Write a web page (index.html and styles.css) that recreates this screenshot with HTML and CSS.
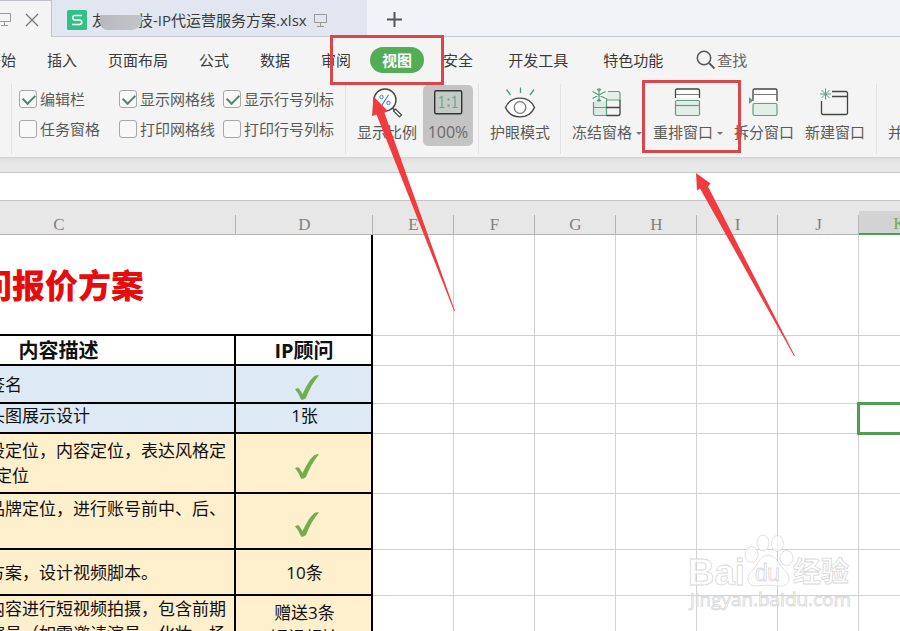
FILE: index.html
```html
<!DOCTYPE html>
<html lang="zh-CN">
<head>
  <meta charset="UTF-8">
  <title>IP代运营服务方案.xlsx</title>
  <link rel="stylesheet" href="styles.css">
</head>
<body>

  <div class="tabs">
    <div class="tab active">
      <svg width="14" height="16" viewBox="0 0 14 16"><path d="M.5 1.500h12v8H.5zM6.500 9.500v4M3 13.500h7" fill="none" stroke="#999"/></svg>
      <svg width="14" height="14" viewBox="0 0 14 14"><path d="M1 1l12 12M13 1L1 13" stroke="#777" stroke-width="1.300"/></svg>
    </div>
    <div class="tab file">
      <svg class="logo" width="20" height="20" viewBox="0 0 20 20"><rect width="20" height="20" rx="1.500" fill="#32c087"/><path d="M15 5.500H8a2.200 2.200 0 0 0 0 4.500h4.500a2.200 2.200 0 0 1 0 4.500H5" fill="none" stroke="#fff" stroke-width="1.600"/></svg>
      <span class="name">友<span class="smudge"></span>技-IP代运营服务方案.xlsx</span>
      <svg width="14" height="16" viewBox="0 0 14 16"><path d="M.5 1.500h12v8H.5zM6.500 9.500v4M3 13.500h7" fill="none" stroke="#999"/></svg>
    </div>
    <svg class="plus" width="15" height="15" viewBox="0 0 15 15"><path d="M7.500 0v15M0 7.500h15" stroke="#555" stroke-width="2"/></svg>
  </div>

  <div class="menu">
    <span>开始</span>
    <span>插入</span>
    <span>页面布局</span>
    <span>公式</span>
    <span>数据</span>
    <span>审阅</span>
    <span class="current">视图</span>
    <span>安全</span>
    <span class="wide">开发工具</span>
    <span class="wide">特色功能</span>
    <span class="search">
      <svg width="20" height="20" viewBox="0 0 20 20"><circle cx="8" cy="8" r="6.700" fill="none" stroke="#555" stroke-width="1.500"/><path d="M13 13l5.500 5.500" stroke="#555" stroke-width="1.800"/></svg>查找
    </span>
  </div>

  <div class="ribbon">
    <div class="group edge"></div>
    <div class="group checks">
      <label><i class="box on"></i>编辑栏</label>
      <label><i class="box on"></i>显示网格线</label>
      <label><i class="box on"></i>显示行号列标</label>
      <label><i class="box"></i>任务窗格</label>
      <label><i class="box"></i>打印网格线</label>
      <label><i class="box"></i>打印行号列标</label>
    </div>
    <div class="group zoom">
      <div class="btn">
        <svg width="34" height="34" viewBox="0 0 34 34"><circle cx="15" cy="15" r="11" fill="#fff" stroke="#444" stroke-width="1.400"/><path d="M22.500 23l2.500 2.500" stroke="#444" stroke-width="1.500"/><path d="M25.500 24l6 6-2 2-6-6z" fill="#fff" stroke="#444" stroke-width="1.200"/><path d="M18.500 10l-6.500 10" stroke="#3f7cc8" stroke-width="1.200"/><circle cx="11.500" cy="12" r="1.700" fill="none" stroke="#3f7cc8"/><circle cx="18.500" cy="18" r="1.700" fill="none" stroke="#3f7cc8"/></svg>
        <span>显示比例</span>
      </div>
      <div class="btn pressed">
        <svg width="34" height="34" viewBox="0 0 34 34"><rect x="3.700" y="5.700" width="27" height="23" rx="1.500" fill="#c4cac6" stroke="#333" stroke-width="1.400"/><path d="M8.500 13l2.500-1.500v11M8.500 22.500h5M21.500 13l2.500-1.500v11M21.500 22.500h5" fill="none" stroke="#6fa188" stroke-width="1.200"/><path d="M16.500 13.500h2v2h-2zM16.500 19.500h2v2h-2z" fill="#6fa188"/></svg>
        <span>100%</span>
      </div>
    </div>
    <div class="group eye">
      <div class="btn">
        <svg width="34" height="34" viewBox="0 0 34 34"><path d="M2.500 22.500C8 10 26 10 31.500 22.500 26 35 8 35 2.500 22.500z" fill="#fff" stroke="#444" stroke-width="1.400"/><circle cx="17" cy="22.500" r="5.800" fill="none" stroke="#777" stroke-width="1.300"/><path d="M3.500 4.500L7.500 10M17.500 2.500V8M31 4.500L27 10" stroke="#4e9a7c" stroke-width="1.300"/></svg>
        <span>护眼模式</span>
      </div>
    </div>
    <div class="group windows">
      <div class="btn drop">
        <svg width="34" height="34" viewBox="0 0 34 34"><path d="M3.500 16.500h13v14h-11a2 2 0 0 1-2-2z" fill="#dcebe3"/><path d="M16.500 6.500h11a2 2 0 0 1 2 2v6h-13z" fill="#e3efe8"/><path d="M18 6.500h10a2 2 0 0 1 2 2v6.500H17M16.500 13v17.500H5.500a2 2 0 0 1-2-2V17M3.500 22.500h13" fill="none" stroke="#5f9d80" stroke-width="1.200"/><path d="M30 15v13.500a2 2 0 0 1-2 2H16.500M16.500 22.500H30" fill="none" stroke="#444" stroke-width="1.300"/><path d="M9 3v14M2.500 6.500l13 7M15.500 6.500l-13 7M7 4l2 2 2-2M7 16l2-2 2 2" fill="none" stroke="#5f9d80" stroke-width="1.200"/></svg>
        <span>冻结窗格<b class="caret"></b></span>
      </div>
      <div class="btn drop">
        <svg width="34" height="34" viewBox="0 0 34 34"><path d="M4.500 13V5.500a1.500 1.500 0 0 1 1.500-1.500h21a1.500 1.500 0 0 1 1.500 1.500V13" fill="#fff" stroke="#444" stroke-width="1.300"/><path d="M5 9.500h23" stroke="#777"/><rect x="4.500" y="15.500" width="24" height="15" rx="1.500" fill="#e2efe8" stroke="#5f9d80" stroke-width="1.200"/><path d="M5 20.500h23" stroke="#5f9d80" stroke-width="1.200"/></svg>
        <span>重排窗口<b class="caret"></b></span>
      </div>
      <div class="btn">
        <svg width="34" height="34" viewBox="0 0 34 34"><path d="M6 16V5.500A1.500 1.500 0 0 1 7.500 4h21A1.500 1.500 0 0 1 30 5.500V16" fill="#fff" stroke="#444" stroke-width="1.300"/><path d="M6.500 9.500h23" stroke="#777"/><rect x="6" y="18.500" width="24" height="12" rx="1.500" fill="#e2efe8" stroke="#5f9d80" stroke-width="1.200"/><path d="M2 12l4 3.500-4 3.500z" fill="#5f9d80"/></svg>
        <span>拆分窗口</span>
      </div>
      <div class="btn">
        <svg width="34" height="34" viewBox="0 0 34 34"><path d="M14 6.500h14A1.500 1.500 0 0 1 29.500 8v20a1.500 1.500 0 0 1-1.500 1.500H5A1.500 1.500 0 0 1 3.500 28V16M14 11.500h15" fill="none" stroke="#444" stroke-width="1.300"/><path d="M7.500 3.500v11M2 9h11M3.500 5l8 8M11.500 5l-8 8" stroke="#5f9d80" stroke-width="1"/></svg>
        <span>新建窗口</span>
      </div>
    </div>
    <div class="group">
      <div class="btn last"><span>并排</span></div>
    </div>
  </div>

  <div class="strip"></div>
  <div class="formula-bar"></div>

  <div class="sheet">
    <table>
      <colgroup>
        <col class="c-desc"><col class="c-ip"><col><col><col><col><col><col><col>
      </colgroup>
      <thead>
        <tr><th>C</th><th>D</th><th>E</th><th>F</th><th>G</th><th>H</th><th>I</th><th>J</th><th class="sel">K</th></tr>
      </thead>
      <tbody>
        <tr class="r-title">
          <td class="title" colspan="2">问报价方案</td>
          <td></td><td></td><td></td><td></td><td></td><td></td><td></td>
        </tr>
        <tr class="r-head">
          <td class="head">内容描述</td><td class="head">IP顾问</td>
          <td></td><td></td><td></td><td></td><td></td><td></td><td></td>
        </tr>
        <tr class="r-sign">
          <td class="desc blue">签名</td>
          <td class="val blue tick"><svg width="24" height="25" viewBox="0 0 24 25"><path d="M0 14.500q2-2 4-1l3.500 5.500C11 12 14.500 5 19.500 1 21 0 22.500 0 24 .3 18.500 7 14 15 11 23q-2.500 2.500-5 1.500C4.500 21 3 17.500 0 14.500z" fill="#74ad50"/></svg></td>
          <td></td><td></td><td></td><td></td><td></td><td></td><td></td>
        </tr>
        <tr class="r-banner">
          <td class="desc blue">头图展示设计</td><td class="val blue">1张</td>
          <td></td><td></td><td></td><td></td><td></td><td></td><td class="cursor"></td>
        </tr>
        <tr class="r-position">
          <td class="desc sand">设定位，内容定位，表达风格定<br><span class="indent">定位</span></td>
          <td class="val sand tick"><svg width="24" height="25" viewBox="0 0 24 25"><path d="M0 14.500q2-2 4-1l3.500 5.500C11 12 14.500 5 19.500 1 21 0 22.500 0 24 .3 18.500 7 14 15 11 23q-2.500 2.500-5 1.500C4.500 21 3 17.500 0 14.500z" fill="#74ad50"/></svg></td>
          <td></td><td></td><td></td><td></td><td></td><td></td><td></td>
        </tr>
        <tr class="r-brand">
          <td class="desc sand">品牌定位，进行账号前中、后、<br>&nbsp;</td>
          <td class="val sand tick"><svg width="24" height="25" viewBox="0 0 24 25"><path d="M0 14.500q2-2 4-1l3.500 5.500C11 12 14.500 5 19.500 1 21 0 22.500 0 24 .3 18.500 7 14 15 11 23q-2.500 2.500-5 1.500C4.500 21 3 17.500 0 14.500z" fill="#74ad50"/></svg></td>
          <td></td><td></td><td></td><td></td><td></td><td></td><td></td>
        </tr>
        <tr class="r-script">
          <td class="desc sand">方案，设计视频脚本。</td><td class="val sand">10条</td>
          <td></td><td></td><td></td><td></td><td></td><td></td><td></td>
        </tr>
        <tr class="r-shoot">
          <td class="desc sand">内容进行短视频拍摄，包含前期<br>演员（如需邀请演员、化妆、场</td>
          <td class="val sand">赠送3条<br>短视频拍</td>
          <td></td><td></td><td></td><td></td><td></td><td></td><td></td>
        </tr>
      </tbody>
    </table>
  </div>

  <svg class="overlay" width="900" height="631" viewBox="0 0 900 631">
    <!-- watermark -->
    <g class="mark">
      <text x="688" y="585" font-size="36" font-weight="bold" font-family="Liberation Sans" textLength="57" lengthAdjust="spacingAndGlyphs">Bai</text>
      <ellipse cx="751.500" cy="554.500" rx="6.500" ry="8"/>
      <ellipse cx="763" cy="543" rx="6" ry="8"/>
      <ellipse cx="777.500" cy="543.500" rx="6" ry="8"/>
      <ellipse cx="786.500" cy="558" rx="6.500" ry="7.500"/>
      <path d="M768 555.500c7 0 9.500 5 13 10.500 3.500 5 8 7 8 12.500 0 6-5 8-10 7.500-4-1-18-1-22 0-5 .5-9-2-9-7.500s4.500-8 8-12.500c3.500-5.500 5-10.500 12-10.500z"/>
      <text x="755" y="581" font-size="23" font-family="Liberation Sans" textLength="25">du</text>
      <text x="793" y="582" font-size="28" font-weight="bold" textLength="56">经验</text>
      <text x="690" y="606" font-size="18" textLength="161" lengthAdjust="spacingAndGlyphs">jingyan.baidu.com</text>
    </g>
    <!-- callouts -->
    <g fill="none" stroke="#d9474a" stroke-width="3">
      <rect x="331.500" y="36.500" width="111" height="47"/>
      <rect x="643.500" y="81.500" width="96" height="70"/>
    </g>
    <path class="arrow" d="M373.500 96.500L387.500 110.500 384.500 113 455 311 454 311 376.500 114.500 372 116z"/>
    <path class="arrow" d="M696 173L710.500 183.500 708 186.500 795 356 794 356 700 188.500 697 190.500z"/>
  </svg>

</body>
</html>
```
FILE: styles.css
```css
* {
  box-sizing: border-box;
}

body {
  margin: 0;
  width: 900px;
  height: 631px;
  overflow: hidden;
  position: relative;
  background: #fff;
  color: #3a3a3a;
  font-family: "Open Sans", "Noto Sans CJK SC", sans-serif;
  font-size: 15px;
}

svg {
  display: block;
  flex: none;
}

/* document tabs */
.tabs {
  display: flex;
  height: 37px;
  background: #f2f3f8;
  border-bottom: 1px solid #c6c9d2;
}

.tab {
  display: flex;
  align-items: center;
  height: 36px;
}

.tab.active {
  width: 52px;
  height: 37px;
  gap: 13px;
  padding-top: 2px;
  background: #f4f4f4;
  border-top: 1px solid #bfc2ca;
  border-right: 1px solid #bfc2ca;
}

.tab.active svg:first-child {
  margin-left: -2px;
}

.tab.file {
  width: 315px;
  padding: 4px 0 0 15px;
  background: #e1e6f0;
}

.name {
  width: 215px;
  margin-left: 5px;
  line-height: 22px;
  white-space: nowrap;
}

.tab.file svg:last-child {
  margin: 2px 0 0 7px;
}

.smudge {
  display: inline-block;
  width: 42px;
  height: 15px;
  margin: 0 -4px 0 -7px;
  vertical-align: -4px;
  background: linear-gradient(100deg, #b6b8bc, #c3c6cb);
  border-radius: 0 4px 12px 8px;
  position: relative;
}

.plus {
  margin: 12px 0 0 20px;
}

/* menu */
.menu {
  display: flex;
  align-items: center;
  gap: 31px;
  height: 45px;
  background: #f4f4f4;
  white-space: nowrap;
}

.menu span {
  margin-top: 1px;
  line-height: 22px;
}

.menu span:first-child {
  margin-left: -14px;
}

.menu .current {
  height: 26px;
  margin: 1px -12px 0 -12px;
  padding: 0 12px;
  border-radius: 13px;
  background: #53ad55;
  color: #fff;
  font-weight: bold;
  line-height: 26px;
}

.menu .wide {
  margin-left: 4px;
}

.menu .search {
  display: flex;
  align-items: center;
  margin-left: 2px;
  gap: 1px;
  color: #666;
}

/* ribbon */
.ribbon {
  display: flex;
  height: 76px;
  padding: 2px 0 3px;
  background: #f4f4f4;
  border-bottom: 1px solid #d2d2d2;
  color: #5a5a5a;
  white-space: nowrap;
  overflow: hidden;
}

.group {
  display: flex;
  flex: none;
  border-right: 1px solid #e2e2e2;
}

.edge {
  width: 12px;
}

.checks {
  display: grid;
  grid-template-columns: 100px 104px 123px;
  grid-template-rows: 30px 30px;
  width: 334px;
  padding-left: 7px;
}

.checks label {
  display: flex;
  align-items: center;
  gap: 3px;
  line-height: 22px;
  padding-bottom: 1px;
}

.box {
  width: 18px;
  height: 18px;
  border: 1px solid #a8a8a8;
  border-radius: 3px;
  background: #f8f8f8;
}

.box.on::after {
  content: "";
  display: block;
  width: 10px;
  height: 6px;
  margin: 3px 0 0 3px;
  border: solid #4c8267;
  border-width: 0 0 2px 2px;
  transform: rotate(-45deg);
}

.zoom {
  width: 133px;
  gap: 6px;
  padding-left: 11px;
}

.eye {
  width: 82px;
  padding-left: 11px;
}

.windows {
  width: 316px;
  gap: 11px;
  padding-left: 11px;
}

.btn {
  display: flex;
  flex-direction: column;
  align-items: center;
  width: 60px;
  height: 61px;
  margin-top: 1px;
}

.btn span {
  line-height: 24px;
  margin-top: 1px;
}

.btn.pressed {
  width: 50px;
  border-radius: 5px;
  background: #c4c4c4;
  color: #6a6a6a;
  font-size: 16px;
}

.btn.drop {
  width: 70px;
}

.btn.last {
  width: 40px;
  margin-left: 6px;
  padding-top: 34px;
}

.caret {
  display: inline-block;
  margin: 0 0 3px 4px;
  border: solid transparent;
  border-width: 3px 3px 0;
  border-top-color: #777;
}

/* bars above the grid */
.strip {
  height: 15px;
  background: linear-gradient(#dedede, #e8e8e8 6px);
  border-bottom: 1px solid #c4c4c4;
}

.formula-bar {
  height: 28px;
  background: #fff;
  border-bottom: 1px solid #c4c4c4;
}

/* grid, scrolled so that column C starts off screen */
.sheet {
  height: 430px;
  overflow: hidden;
}

table {
  width: 1058px;
  margin-left: -118px;
  table-layout: fixed;
  border-collapse: separate;
  border-spacing: 0;
}

col {
  width: 81px;
}

.c-desc {
  width: 354px;
}

.c-ip {
  width: 137px;
}

th {
  height: 34px;
  padding: 14px 0 0;
  border-bottom: 1px solid #b4b4b4;
  background: linear-gradient(#b4b4b4, #b4b4b4) right bottom / 1px 19px no-repeat #e7e7e7;
  color: #808080;
  font: 17px/18px "Liberation Serif", serif;
}

th.sel {
  border-bottom: 2px solid #4f9d50;
  background: linear-gradient(#d3d3d3, #d3d3d3) right bottom / 100% 22px no-repeat #e7e7e7;
  color: #6fae52;
}

td {
  padding: 0;
  border-right: 1px solid #d0d0d0;
  border-bottom: 1px solid #d0d0d0;
}

.title,
.head,
.desc,
.val {
  border-right: 2px solid #000;
  border-bottom: 2px solid #000;
  color: #111;
  font-size: 17px;
  line-height: 25px;
  white-space: nowrap;
}

.title {
  padding: 2px 0 0 97px;
  color: #e60c0c;
  font-size: 33px;
  font-weight: 900;
  line-height: 40px;
}

.head {
  padding-left: 1px;
  font-size: 20px;
  font-weight: bold;
  text-align: center;
}

.desc {
  padding-left: 106px;
}

.indent {
  margin-left: 7px;
}

.val {
  padding-left: 2px;
  text-align: center;
}

.tick {
  padding: 6px 0 0 6px;
}

.tick svg {
  margin: 0 auto;
}

.blue {
  background: #ddeaf5;
}

.sand {
  background: #feefcd;
}

.r-title { height: 101px; }
.r-head { height: 30px; }
.r-sign { height: 38px; }
.r-banner { height: 30px; }
.r-position { height: 60px; }
.r-brand { height: 56px; }
.r-script { height: 46px; }
.r-shoot { height: 60px; }

.r-banner .desc,
.r-banner .val {
  line-height: 24px;
  padding-bottom: 4px;
}

.r-shoot .desc {
  padding-bottom: 8px;
}

.cursor {
  position: relative;
}

.cursor::after {
  content: "";
  position: absolute;
  top: -2px;
  right: -1px;
  bottom: -2px;
  left: -2px;
  border: 3px solid #4f9d50;
}

.overlay {
  position: absolute;
  top: 0;
  left: 0;
}

.mark {
  fill: #fff;
  fill-opacity: .7;
  stroke: #d8d8d8;
  stroke-width: .8;
}

.arrow {
  fill: #f03c3e;
}
```
